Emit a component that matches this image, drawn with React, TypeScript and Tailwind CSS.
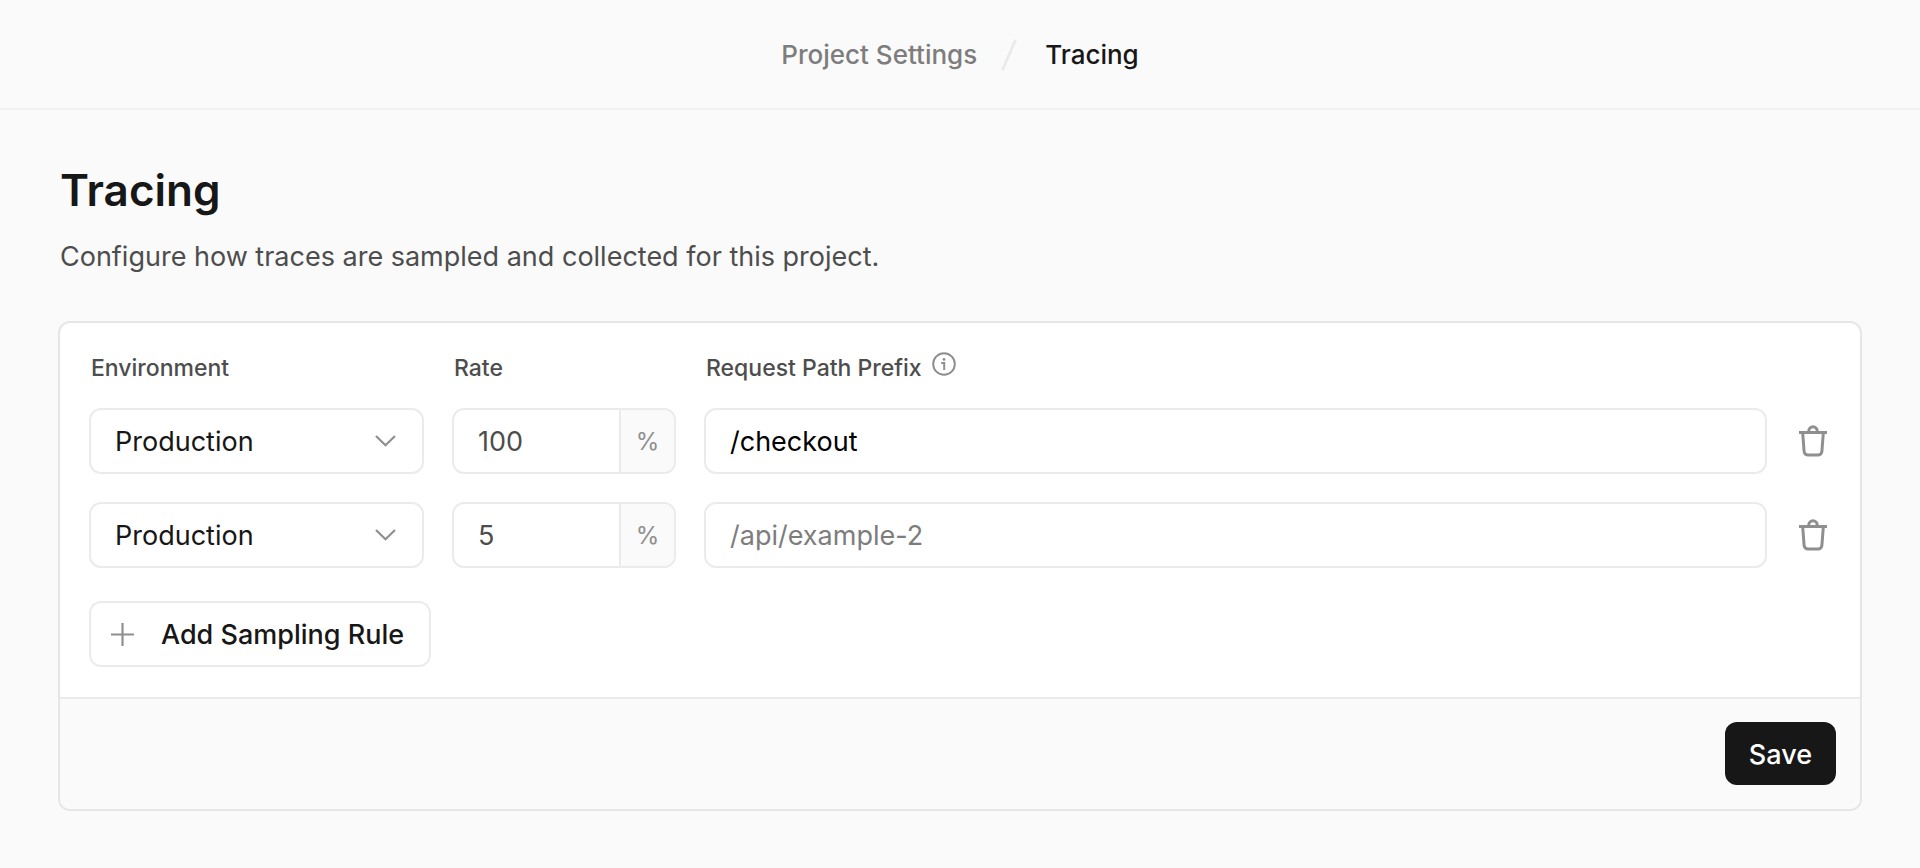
import { useState } from "react";

type Rule = { id: number; environment: string; rate: string; path: string };

const initialRules: Rule[] = [
  { id: 1, environment: "Production", rate: "100", path: "/checkout" },
  { id: 2, environment: "Production", rate: "5", path: "" },
];

const columns = "grid grid-cols-[335px_224px_minmax(0,1fr)_36px] gap-x-7";

function ChevronIcon() {
  return (
    <svg className="pointer-events-none absolute top-[27px] right-[28px] h-3 w-[21px]" viewBox="0 0 21 12" fill="none" stroke="#8f8f8f" strokeWidth="2.2" aria-hidden="true">
      <path d="M1 1l9.5 9.2L20 1" />
    </svg>
  );
}

function TrashIcon() {
  return (
    <svg className="h-8 w-7" viewBox="0 0 28 32" fill="none" stroke="#8f8f8f" strokeWidth="3" aria-hidden="true">
      <path d="M0 7.5h28" />
      <path d="M9.8 7V6a4.2 4.2 0 0 1 8.4 0v1" />
      <path d="M3.7 8l1.4 18.4a4 4 0 0 0 4 3.7h9.8a4 4 0 0 0 4-3.7L24.3 8" />
    </svg>
  );
}

function InfoIcon() {
  return (
    <svg className="h-6 w-6" viewBox="0 0 24 24" fill="none" stroke="#8f8f8f" strokeWidth="2" aria-hidden="true">
      <circle cx="12" cy="12" r="10.8" />
      <path d="M9.2 11h3v7" />
      <circle cx="12" cy="7.4" r="1.4" fill="#8f8f8f" stroke="none" />
    </svg>
  );
}

function PlusIcon() {
  return (
    <svg className="h-[23px] w-[23px]" viewBox="0 0 23 23" fill="none" stroke="#8f8f8f" strokeWidth="2.2" aria-hidden="true">
      <path d="M0 11.5h23M11.5 0v23" />
    </svg>
  );
}

export default function App() {
  const [rules, setRules] = useState<Rule[]>(initialRules);

  const update = (id: number, patch: Partial<Rule>) =>
    setRules((list) => list.map((rule) => (rule.id === id ? { ...rule, ...patch } : rule)));
  const remove = (id: number) => setRules((list) => list.filter((rule) => rule.id !== id));
  const add = () =>
    setRules((list) => [...list, { id: Date.now(), environment: "Production", rate: "5", path: "" }]);

  return (
    <div className="min-h-screen bg-[#fafafa] font-['Inter',sans-serif] text-[27px] leading-8 text-[#171717]">
      <header className="border-b-2 border-[#f2f2f2] pt-[39px] pb-[37px]">
        <nav aria-label="Breadcrumb" className="flex items-center justify-center text-[26px] font-medium">
          <a href="#settings" className="text-[#7d7d7d]">Project Settings</a>
          <svg className="mx-6 h-8 w-4" viewBox="0 0 16 32" fill="none" stroke="#eaeaea" strokeWidth="2.8" aria-hidden="true">
            <path d="M14.6 .8L1.4 31.2" />
          </svg>
          <a href="#tracing" aria-current="page" className="ml-1">Tracing</a>
        </nav>
      </header>

      <main className="px-[58px] pt-12 pb-14">
        <h1 className="pl-0.5 text-[44px] leading-[64px] font-semibold">Tracing</h1>
        <p className="mt-[19px] pl-0.5 text-[#4d4d4d]">Configure how traces are sampled and collected for this project.</p>

        <form
          className="mt-12 overflow-hidden rounded-xl border-2 border-[#e6e6e6] bg-white"
          onSubmit={(event) => event.preventDefault()}
        >
          <div className="px-[29px] pt-[31px] pb-[30px]">
            <div className={`${columns} mb-[26px] text-[23px] leading-7 font-medium text-[#4d4d4d]`}>
              <span id="environment-label" className="pl-0.5">Environment</span>
              <span id="rate-label" className="pl-0.5">Rate</span>
              <span className="flex gap-2.5 pl-0.5">
                <span id="path-label">Request Path Prefix</span>
                <button type="button" aria-label="About request path prefixes" className="-mt-0.5 self-start">
                  <InfoIcon />
                </button>
              </span>
            </div>

            <div className="flex flex-col gap-7">
              {rules.map((rule, index) => (
                <div key={rule.id} className={`${columns} items-center`}>
                  <div className="relative">
                    <select
                      aria-labelledby="environment-label"
                      className="h-[66px] w-full appearance-none rounded-xl border-2 border-[#ebebeb] bg-white pt-0.5 pr-16 pl-6"
                      value={rule.environment}
                      onChange={(event) => update(rule.id, { environment: event.target.value })}
                    >
                      <option>Production</option>
                      <option>Preview</option>
                      <option>Development</option>
                    </select>
                    <ChevronIcon />
                  </div>
                  <div className="flex h-[66px] overflow-hidden rounded-xl border-2 border-[#ebebeb] bg-white">
                    <input
                      aria-labelledby="rate-label"
                      inputMode="numeric"
                      className="w-0 min-w-0 flex-1 pt-0.5 pl-6 text-[#4d4d4d] outline-none"
                      value={rule.rate}
                      onChange={(event) => update(rule.id, { rate: event.target.value })}
                    />
                    <span className="flex w-[55px] items-center justify-center border-l-2 border-[#ebebeb] bg-[#fafafa] pt-0.5 text-2xl text-[#8f8f8f]">
                      %
                    </span>
                  </div>
                  <input
                    aria-labelledby="path-label"
                    className="h-[66px] w-full min-w-0 rounded-xl border-2 border-[#ebebeb] bg-white px-6 text-black placeholder:text-[#7d7d7d]"
                    placeholder={`/api/example-${index + 1}`}
                    value={rule.path}
                    onChange={(event) => update(rule.id, { path: event.target.value })}
                  />
                  <button
                    type="button"
                    aria-label="Remove rule"
                    className="flex h-[66px] items-center justify-center"
                    onClick={() => remove(rule.id)}
                  >
                    <TrashIcon />
                  </button>
                </div>
              ))}
            </div>

            <button
              type="button"
              className="mt-[33px] flex h-[66px] items-center gap-[27px] rounded-xl border-2 border-[#ebebeb] bg-white pr-[25px] pl-5 font-medium"
              onClick={add}
            >
              <PlusIcon />
              <span className="pt-0.5">Add Sampling Rule</span>
            </button>
          </div>

          <footer className="flex justify-end border-t-2 border-[#ebebeb] bg-[#fafafa] px-6 pt-[23px] pb-6">
            <button type="submit" className="h-[63px] rounded-xl bg-[#171717] px-6 pt-0.5 font-medium text-white">
              Save
            </button>
          </footer>
        </form>
      </main>
    </div>
  );
}
